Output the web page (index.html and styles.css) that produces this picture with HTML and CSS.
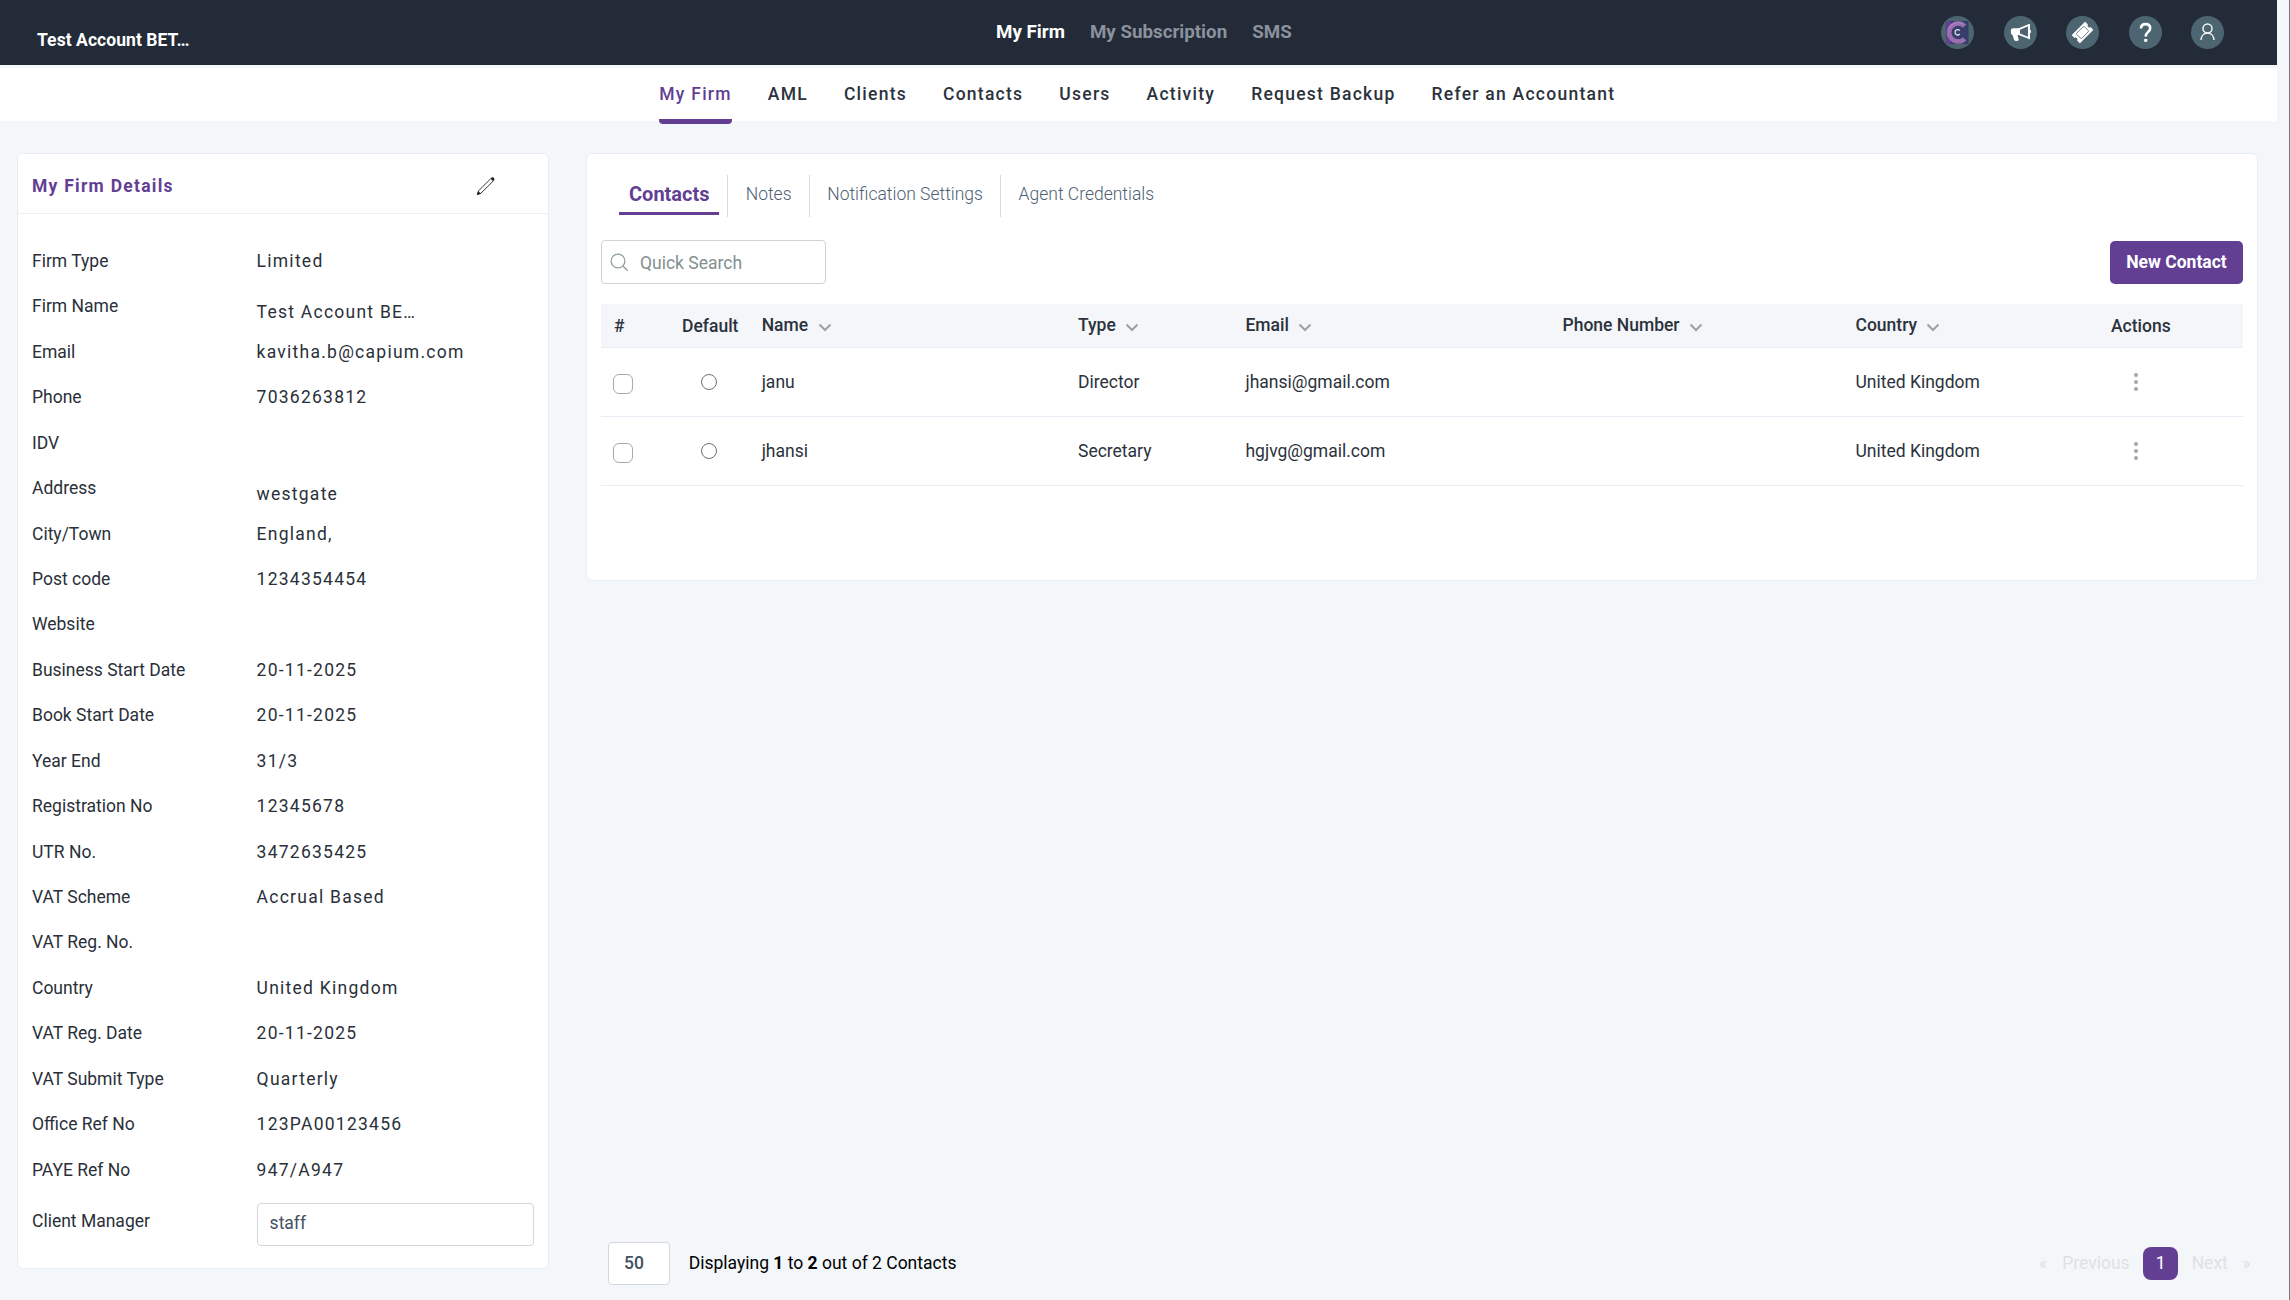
FILE: index.html
```html
<!DOCTYPE html>
<html lang="en">
<head>
<meta charset="utf-8">
<title>My Firm</title>
<link rel="stylesheet" href="styles.css">
</head>
<body>
<div class="page">
  <header class="topbar">
    <div class="account">Test Account BET…</div>
    <nav class="topnav">
      <a class="active">My Firm</a><a>My Subscription</a><a>SMS</a>
    </nav>
    <div class="tools">
      <span class="tool"><svg width="33" height="33" viewBox="0 0 33 33"><rect x="5.5" y="5" width="22" height="23" fill="#353f69"/><rect x="5.5" y="5" width="4" height="23" fill="#653f97"/><path d="M23.6 10.2A9 9 0 1 0 23.6 22.8" fill="none" stroke="#9a6fb0" stroke-width="4.6"/><path d="M21.5 7.8A10 10 0 0 0 7.6 13" fill="none" stroke="#b9a3c4" stroke-width="1" stroke-dasharray="2 1.4"/><path d="M18.7 14.6A2.6 2.7 0 1 0 18.7 18" fill="none" stroke="#dfe0ea" stroke-width="1.3"/></svg></span>
      <span class="tool"><svg width="33" height="33" viewBox="0 0 33 33"><path d="M15 13.1 24.8 9v13L15 18.1z" fill="none" stroke="#fff" stroke-width="1.7" stroke-linejoin="round"/><path d="M15.5 12.2H9.2a2.4 2.4 0 0 0-2.4 2.4v2a2.4 2.4 0 0 0 1.7 2.3l1.6 4.8c.3.8 1 1.2 1.7 1.2h1.6c.9 0 1.5-.8 1.2-1.6l-1.1-4.3h2z" fill="#fff"/><path d="M25.3 8v15.2M26.2 14v3" stroke="#fff" stroke-width="1.3"/></svg></span>
      <span class="tool"><svg width="33" height="33" viewBox="0 0 33 33"><g transform="rotate(-45 16.5 16.5)"><path d="M7.5 11.2h18v3.1a2.3 2.3 0 0 0 0 4.4v3.1h-18v-3.1a2.3 2.3 0 0 0 0-4.4z" fill="#fff" stroke="#fff" stroke-width="1" stroke-linejoin="round"/><rect x="11" y="12.9" width="11" height="7.2" rx="1.2" fill="none" stroke="#6b808a" stroke-width=".9"/></g></svg></span>
      <span class="tool"><svg width="33" height="33" viewBox="0 0 33 33"><path d="M12 12.6c0-2.9 1.9-4.5 4.6-4.5s4.6 1.6 4.6 4.2c0 3.6-4.5 3.7-4.5 8.2" fill="none" stroke="#fff" stroke-width="2.6"/><rect x="15.2" y="23" width="3" height="2.8" fill="#fff"/></svg></span>
      <span class="tool"><svg width="33" height="33" viewBox="0 0 33 33"><circle cx="16.5" cy="12.5" r="4.5" fill="none" stroke="#f1f4f5" stroke-width="1.5"/><path d="M10 24c.2-4.2 3-6.9 6.500-6.9s6.300 2.700 6.500 6.900" fill="none" stroke="#f1f4f5" stroke-width="1.5"/></svg></span>
    </div>
  </header>
  <nav class="subnav">
    <a class="active">My Firm</a><a>AML</a><a>Clients</a><a>Contacts</a><a>Users</a><a>Activity</a><a>Request Backup</a><a>Refer an Accountant</a>
  </nav>
  <main class="content">
    <section class="card firm">
      <div class="firm-head">
        <h2>My Firm Details</h2>
        <svg class="pencil" width="20" height="20" viewBox="0 0 20 20"><path d="M1.3 18.5 2.5 14.9 14.9 2.5M1.3 18.5 4.9 17.2 17.4 4.9" fill="none" stroke="#3b3b3b" stroke-width="1"/><path d="M14.5 2.4 15.9 1.3c1.2-.7 3.2 1.1 2.4 2.5l-1.2 1.5zM1 19l1.2-4 2.7 2.7z" fill="#1b1f26"/></svg>
      </div>
      <dl class="details">
        <div><dt>Firm Type</dt><dd>Limited</dd></div>
        <div><dt>Firm Name</dt><dd class="low">Test Account BE…</dd></div>
        <div><dt>Email</dt><dd>kavitha.b@capium.com</dd></div>
        <div><dt>Phone</dt><dd>7036263812</dd></div>
        <div><dt>IDV</dt><dd></dd></div>
        <div><dt>Address</dt><dd class="low">westgate</dd></div>
        <div><dt>City/Town</dt><dd>England,</dd></div>
        <div><dt>Post code</dt><dd>1234354454</dd></div>
        <div><dt>Website</dt><dd></dd></div>
        <div><dt>Business Start Date</dt><dd>20-11-2025</dd></div>
        <div><dt>Book Start Date</dt><dd>20-11-2025</dd></div>
        <div><dt>Year End</dt><dd>31/3</dd></div>
        <div><dt>Registration No</dt><dd>12345678</dd></div>
        <div><dt>UTR No.</dt><dd>3472635425</dd></div>
        <div><dt>VAT Scheme</dt><dd>Accrual Based</dd></div>
        <div><dt>VAT Reg. No.</dt><dd></dd></div>
        <div><dt>Country</dt><dd>United Kingdom</dd></div>
        <div><dt>VAT Reg. Date</dt><dd>20-11-2025</dd></div>
        <div><dt>VAT Submit Type</dt><dd>Quarterly</dd></div>
        <div><dt>Office Ref No</dt><dd>123PA00123456</dd></div>
        <div><dt>PAYE Ref No</dt><dd>947/A947</dd></div>
        <div class="manager"><dt>Client Manager</dt><dd class="select">staff</dd></div>
      </dl>
    </section>
    <div class="side">
      <section class="card contacts">
        <div class="tabs">
          <a class="active"><span>Contacts</span></a><a>Notes</a><a>Notification Settings</a><a>Agent Credentials</a>
        </div>
        <div class="actions">
          <div class="search">
            <svg width="19" height="19" viewBox="0 0 19 19"><circle cx="8" cy="8" r="6.9" fill="none" stroke="#8b9a9a" stroke-width="1.2"/><path d="M13 13l4.7 4.7" stroke="#8b9a9a" stroke-width="1.3"/></svg>
            <span>Quick Search</span>
          </div>
          <button class="new">New Contact</button>
        </div>
        <div class="table">
          <div class="tr th">
            <span class="c-num">#</span><span class="c-def">Default</span>
            <span class="sort">Name <svg width="14" height="9" viewBox="0 0 14 9"><path d="M1.5 1.5 7 7l5.5-5.5"/></svg></span>
            <span class="sort">Type <svg width="14" height="9" viewBox="0 0 14 9"><path d="M1.5 1.5 7 7l5.5-5.5"/></svg></span>
            <span class="sort">Email <svg width="14" height="9" viewBox="0 0 14 9"><path d="M1.5 1.5 7 7l5.5-5.5"/></svg></span>
            <span class="sort">Phone Number <svg width="14" height="9" viewBox="0 0 14 9"><path d="M1.5 1.5 7 7l5.5-5.5"/></svg></span>
            <span class="sort">Country <svg width="14" height="9" viewBox="0 0 14 9"><path d="M1.5 1.5 7 7l5.5-5.5"/></svg></span>
            <span>Actions</span>
          </div>
          <div class="tr">
            <span class="c-num"><i class="check"></i></span><span class="c-def"><i class="radio"></i></span>
            <span>janu</span><span>Director</span><span>jhansi@gmail.com</span><span></span><span>United Kingdom</span>
            <span class="dots"><i></i><i></i><i></i></span>
          </div>
          <div class="tr">
            <span class="c-num"><i class="check"></i></span><span class="c-def"><i class="radio"></i></span>
            <span>jhansi</span><span>Secretary</span><span>hgjvg@gmail.com</span><span></span><span>United Kingdom</span>
            <span class="dots"><i></i><i></i><i></i></span>
          </div>
        </div>
      </section>
      <footer class="pager">
        <div class="size">50</div>
        <div class="info">Displaying <b>1</b> to <b>2</b> out of 2 Contacts</div>
        <div class="pages"><span class="arrow">«</span><span class="prev">Previous</span><span class="current">1</span><span class="next">Next</span><span class="arrow">»</span></div>
      </footer>
    </div>
  </main>
</div>
</body>
</html>
```
FILE: styles.css
```css
* { box-sizing: border-box; }

body {
  margin: 0;
  background: #f3f7fa;
  font: 400 17.5px/22px Roboto, "Liberation Sans", sans-serif;
  color: #2b323c;
}

.page {
  height: 1300px;
  padding-right: 12px;
  border-right: 1px solid #77797d;
  display: flex;
  flex-direction: column;
  overflow: hidden;
}

/* Top bar */
.topbar {
  height: 65px;
  flex: none;
  display: grid;
  grid-template-columns: 959px 1fr auto;
  background: #222b37;
  padding: 0 53px 0 37px;
}
.account { padding-top: 29px; color: #fff; font-weight: 700; letter-spacing: .06px; }
.topnav { display: flex; gap: 25px; padding-top: 21px; font-size: 18.75px; font-weight: 700; color: #8b929d; }
.topnav .active { color: #fff; }
.tools { display: flex; gap: 29.5px; padding-top: 16px; }
.tool { width: 33px; height: 33px; border-radius: 50%; background: #4d6570; }
.tool svg { display: block; }

/* Section navigation */
.subnav {
  height: 53px;
  flex: none;
  margin-top: 3px;
  background: #fff;
  display: flex;
  gap: 36px;
  padding: 15px 0 0 659.3px;
  font-weight: 500;
  letter-spacing: 1.25px;
  border-bottom-right-radius: 2px;
}
.subnav a { height: 41px; }
.subnav .active {
  color: #633f94;
  border-bottom: 5px solid #633f94;
  border-radius: 0 0 4px 4px;
}

.content {
  flex: 1;
  display: grid;
  grid-template-columns: 532px 1672px;
  column-gap: 37px;
  padding: 32px 0 0 17px;
}
.card { background: #fff; border: 1px solid #e9eef4; border-radius: 6px; }

/* Firm details */
.firm { height: 1115.5px; }
.firm-head {
  height: 60px;
  display: flex;
  justify-content: space-between;
  padding: 21px 52px 0 14px;
  border-bottom: 1px solid #eceff3;
}
.firm-head h2 { margin: 0; font-size: 17.5px; line-height: 22px; font-weight: 700; letter-spacing: 1.25px; color: #633f94; }
.pencil { margin-top: 1px; }
.details { margin: 0; padding: 24.2px 14px 0; }
.details > div { display: grid; grid-template-columns: 224.6px 277px; height: 45.45px; padding-top: 11.7px; }
.details dt { color: #2a3039; }
.details dd { margin: 0; letter-spacing: 1.25px; color: #2a3039; }
.details .low { padding-top: 6px; }
.details .manager { height: 55px; padding-top: 10.5px; }
.manager dt { padding-top: 7px; }
.details .select {
  height: 43px;
  border: 1px solid #d3d5d8;
  border-radius: 4px;
  padding: 8px 12px;
  letter-spacing: 0;
  color: #44505f;
}

/* Contacts */
.side { display: flex; flex-direction: column; }
.contacts { height: 428px; padding: 21px 14px 0; }
.tabs { display: flex; height: 42px; padding-left: 17.5px; font-weight: 300; color: #4e6172; }
.tabs a { padding: 8px 17.2px 0 17.5px; border-left: 1px solid #d8dbde; }
.tabs .active { padding: 0 8.7px 0 0; border: 0; font-weight: 700; font-size: 20px; color: #633f94; }
.tabs .active span { display: block; height: 40px; padding: 8px 9px 0 10.5px; border-bottom: 3px solid #633f94; }
.actions { display: flex; justify-content: space-between; margin-top: 23px; }
.search {
  width: 225px;
  height: 44px;
  display: flex;
  border: 1px solid #d0d3d6;
  border-radius: 4px;
  padding: 11px 10px 0 8px;
  color: #82908f;
}
.search svg { margin: 1px 11px 0 0; }
.new {
  width: 133px;
  height: 43px;
  margin-top: 1px;
  padding: 0 0 2px;
  border: 0;
  border-radius: 5px;
  background: #633f94;
  color: #fff;
  font: 700 17.5px/22px Roboto, "Liberation Sans", sans-serif;
}
.table { margin-top: 20px; }
.tr {
  height: 69px;
  display: grid;
  grid-template-columns: 80px 80.7px 316.3px 167.5px 317px 293px 255.5px 1fr;
  border-bottom: 1px solid #e8ecf4;
  padding-top: 22.5px;
}
.th { height: 44px; padding-top: 10px; background: #f4f6fa; font-weight: 500; }
.c-num { padding-left: 13px; }
.th .c-def { padding-left: 1px; }
.th > span { padding-top: 1px; }
.th > .sort { padding-top: 0; }
.sort svg { margin-left: 5px; vertical-align: -1px; fill: none; stroke: #97a3a3; stroke-width: 2; }
.check, .radio { display: block; border: 1px solid #a6a9b5; }
.check { width: 20px; height: 20px; margin: 3.5px 0 0 -1px; border-radius: 6px; }
.radio { width: 16px; height: 16px; margin: 3px 0 0 20px; border: 1.5px solid #6c6f75; border-radius: 50%; }
.dots { display: flex; flex-direction: column; gap: 3px; padding: 2.5px 0 0 23px; }
.dots i { width: 4px; height: 4px; border-radius: 50%; background: #a2a8ae; }

/* Pagination */
.pager { display: flex; margin: auto 0 15px 22px; height: 43px; color: #000; }
.size {
  width: 62px;
  height: 43px;
  padding: 9px 15px;
  background: #fff;
  border: 1px solid #d3d5d8;
  border-radius: 4px;
  font-weight: 500;
  color: #44505f;
}
.info { padding: 10px 0 0 18.7px; }
.info b { font-weight: 700; }
.pages { display: flex; margin: 5px 7.5px 0 auto; color: #dfe1e4; }
.pages span { padding-top: 5px; }
.pages .prev { margin: 0 13.5px 0 15px; }
.pages .current { width: 35px; height: 33px; border-radius: 8px; background: #633f94; color: #fff; text-align: center; }
.pages .next { margin: 0 14.5px 0 13.5px; }
```
